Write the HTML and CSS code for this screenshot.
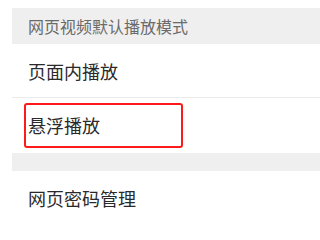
FILE: index.html
```html
<!DOCTYPE html>
<html lang="zh-CN">
<head>
<meta charset="utf-8">
<link rel="stylesheet" href="styles.css">
</head>
<body>
<div class="page">
  <div class="section-title">网页视频默认播放模式</div>
  <div class="item item-sep">页面内播放</div>
  <div class="item item-hl">悬浮播放<span class="highlight"></span></div>
  <div class="gap"></div>
  <div class="item">网页密码管理</div>
</div>
</body>
</html>
```
FILE: styles.css
```css
html, body {
  margin: 0;
  padding: 0;
  background: #ffffff;
}
.page {
  padding: 8px 0 0 12px;
  font-family: "Noto Sans CJK SC", "Noto Sans", sans-serif;
}
.section-title {
  height: 36px;
  background: #efefef;
  color: #6a6a6a;
  font-size: 16px;
  line-height: 36px;
  padding-left: 16px;
}
.item {
  position: relative;
  height: 54px;
  line-height: 54px;
  font-size: 18px;
  color: #2a2a2a;
  padding-left: 16px;
}
.item-sep {
  box-shadow: inset 0 -1px 0 #ececec;
}
.item-hl {
  height: 55px;
  line-height: 55px;
}
.highlight {
  position: absolute;
  left: 12px;
  top: 5px;
  width: 155px;
  height: 41px;
  border: 2px solid #ff1a1a;
  border-radius: 3px;
}
.gap {
  height: 18px;
  background: #efefef;
}
```
